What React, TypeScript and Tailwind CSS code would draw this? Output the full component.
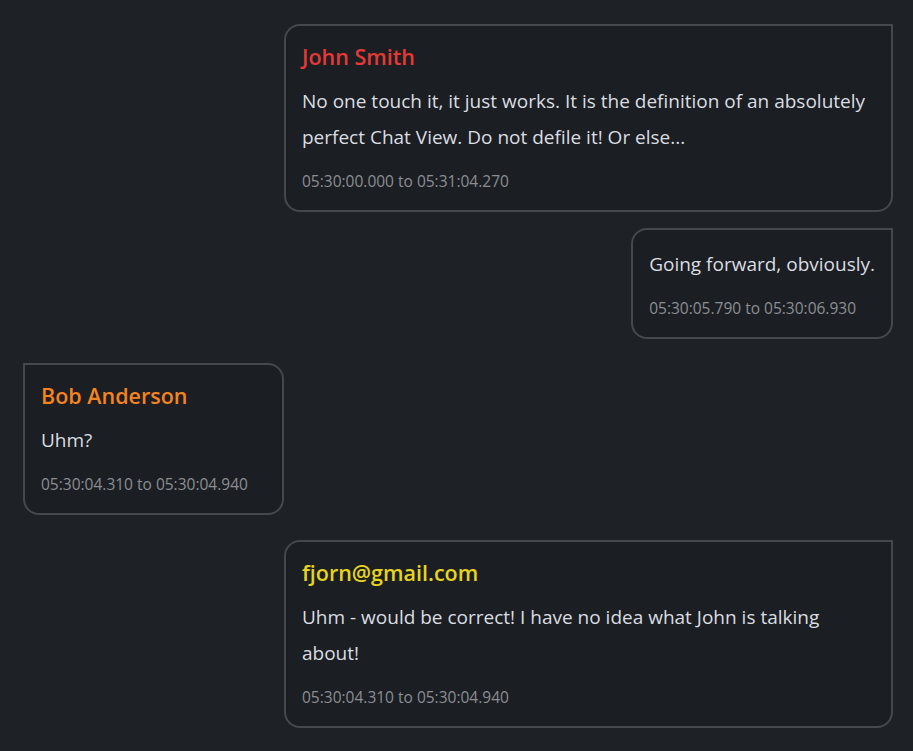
import React from "react";

type Msg = {
  name?: string;
  color?: string;
  text: string;
  time: string;
  side: "left" | "right";
  gap: string;
};

const messages: Msg[] = [
  {
    name: "John Smith",
    color: "text-[#e53935]",
    text: "No one touch it, it just works. It is the definition of an absolutely perfect Chat View. Do not defile it! Or else...",
    time: "05:30:00.000 to 05:31:04.270",
    side: "right",
    gap: "mt-0",
  },
  {
    text: "Going forward, obviously.",
    time: "05:30:05.790 to 05:30:06.930",
    side: "right",
    gap: "mt-4",
  },
  {
    name: "Bob Anderson",
    color: "text-[#f5831f]",
    text: "Uhm?",
    time: "05:30:04.310 to 05:30:04.940",
    side: "left",
    gap: "mt-6",
  },
  {
    name: "fjorn@gmail.com",
    color: "text-[#e8d41c]",
    text: "Uhm - would be correct! I have no idea what John is talking about!",
    time: "05:30:04.310 to 05:30:04.940",
    side: "right",
    gap: "mt-[25px]",
  },
];

function Bubble({ m }: { m: Msg }) {
  const sideCls =
    m.side === "right"
      ? "self-end rounded-2xl rounded-tr-none"
      : "self-start rounded-2xl rounded-tl-none";
  return (
    <div
      className={`${m.gap} ${sideCls} max-w-[70%] min-w-[261px] border-2 border-[#45494e] bg-[#1b1e22] px-4 pt-4 pb-4`}
    >
      {m.name && (
        <div className={`${m.color} text-[21.5px] font-semibold leading-[30px] mb-[11px]`}>
          {m.name}
        </div>
      )}
      <div className="text-[19px] leading-[36px] text-[#dadde1]">{m.text}</div>
      <div className="mt-[13px] text-[15.5px] leading-[26px] text-[#8b8e93]">{m.time}</div>
    </div>
  );
}

export default function App() {
  return (
    <div
      className="min-h-screen bg-[#1e2227] pl-[23px] pr-[20px] pt-[24px] flex flex-col"
      style={{ fontFamily: '"Open Sans", "Noto Sans", sans-serif' }}
    >
      {messages.map((m, i) => (
        <Bubble key={i} m={m} />
      ))}
    </div>
  );
}
